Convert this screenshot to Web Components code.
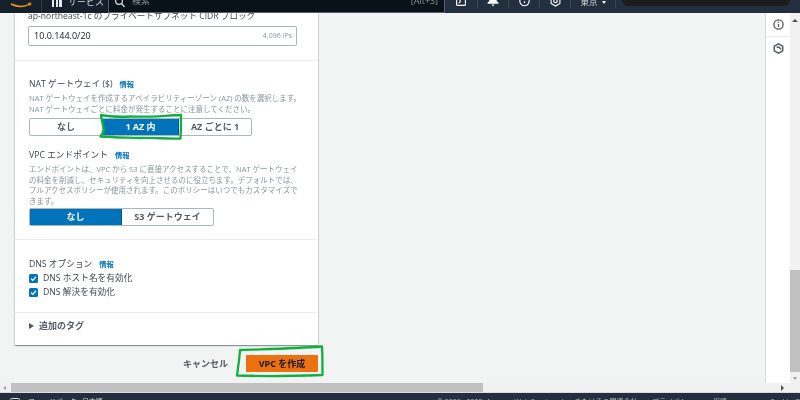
<!DOCTYPE html>
<html lang="ja"><head><meta charset="utf-8">
<style>
html,body{margin:0;height:100%;overflow:hidden}
body{font:9px/12px "Noto Sans CJK JP","Open Sans",sans-serif;color:#16191f;background:#f2f3f3}
</style></head><body>
<aws-shell>
<top-bar slot="top"></top-bar>
<vpc-card slot="card"></vpc-card>
<form-actions slot="actions"></form-actions>
<side-rail slot="rail"></side-rail>
<foot-bar slot="foot"></foot-bar>
</aws-shell>
<script>
const FONT='"Open Sans","Noto Sans CJK JP",sans-serif';
function def(name,html){customElements.define(name,class extends HTMLElement{
  constructor(){super();this.attachShadow({mode:'open'}).innerHTML=html;}
});}
def('aws-shell',`<style>
:host{display:grid;grid-template-rows:13px 370px 10px 7px;height:400px;width:800px;position:relative;overflow:hidden;font-family:${FONT};font-size:9px;filter:blur(.4px)}
.mid{display:grid;grid-template-columns:765px 25px 10px;min-height:0;overflow:hidden}
.content{padding:0 0 0 15px;min-width:0;overflow:hidden}
.vbar{background:#f1f1f1;display:flex;flex-direction:column;align-items:center;position:relative}
.up{width:0;height:0;border:3px solid transparent;border-top:0;border-bottom:3px solid #505050;margin-top:6px}
.thumb{position:absolute;left:0;right:0;top:257px;height:102px;background:#c1c1c1}
.dn{position:absolute;bottom:3px;left:3px;border:2.5px solid transparent;border-bottom:0;border-top:3px solid #a0a0a0}
.h{display:flex;background:#f1f1f1;align-items:center;position:relative;border-bottom:1px solid #dcdcdc}
.hthumb{position:absolute;left:11px;width:472px;top:0;bottom:0;background:#c1c1c1}
.l{margin-left:3px;border:2.5px solid transparent;border-left:0;border-right:3px solid #a0a0a0}
.r{position:absolute;left:781px;border:3px solid transparent;border-right:0;border-left:3px solid #505050}
</style>
<slot name="top"></slot>
<div class="mid"><div class="content"><slot name="card"></slot><slot name="actions"></slot></div><slot name="rail"></slot>
<div class="vbar"><i class="up"></i><i class="thumb"></i><i class="dn"></i></div></div>
<div class="h"><i class="l"></i><i class="hthumb"></i><i class="r"></i></div>
<slot name="foot"></slot>`);
def('top-bar',`<style>
:host{display:flex;height:13px;background:#232f3e;overflow:hidden;color:#d5dbdb;position:relative;z-index:2;font-size:9px}
.dark{width:108px;background:#16202d;flex:none;position:relative}
.aws{position:absolute;left:11px;top:-12px;font:700 13px/14px "Liberation Sans",sans-serif;color:#fff;letter-spacing:.5px}
.logo{position:absolute;left:10px;top:-6px}
.sep{position:absolute;left:41px;top:0;bottom:0;width:1px;background:#2f3a48}
.svc{position:absolute;left:52px;top:-4px;display:flex;align-items:center;gap:6px;white-space:nowrap}
.grid{width:10px;height:10px;background:repeating-linear-gradient(90deg,#e6e9ea 0 2.4px,transparent 2.4px 3.6px)}
.search{flex:none;width:337px;background:#0b1119;border:solid #555f6b;border-width:0 1px 1px;box-sizing:border-box;display:flex;padding:0 6px 0 6px;color:#8d949c;justify-content:space-between;line-height:10px}
.search span{margin-top:-4px;white-space:nowrap;font-size:9px}
.search svg{margin-right:7px;margin-top:-3px;flex:none}
.q{display:flex}
.ic{flex:none;width:31px;display:flex;align-items:flex-start;justify-content:center;border-right:1px solid #3a4654;height:8px;box-sizing:border-box}
.ic svg{margin-top:-5px}
.tok{flex:none;white-space:nowrap;display:flex;gap:4px;align-items:center;width:45px;justify-content:center;margin-top:-4px;height:12px;border-right:1px solid #3a4654;box-sizing:border-box;font-size:8.5px}
.tok i{border:2.5px solid transparent;border-bottom:0;border-top:3px solid #fff}
.black{flex:none;width:168px;height:6px;margin-left:6px;background:#1c1c1c;border-radius:0 0 6px 6px}
</style>
<div class="dark">
<span class="aws">aws</span>
<svg class="logo" width="22" height="16" viewBox="0 0 22 16" fill="none"><path d="M1 10q10 5 19 0" stroke="#f90" stroke-width="1.4"/><path d="M18 9.4l3-.3-1 2.600" stroke="#f90" stroke-width="1"/></svg>
<i class="sep"></i><div class="svc"><i class="grid"></i><span>サービス</span></div></div>
<div class="search"><div class="q"><svg width="10" height="11" viewBox="0 0 10 11" fill="none" stroke="#d5dbdb" stroke-width="1.2"><circle cx="4" cy="4" r="3.4"/><path d="M6.5 6.5l3 3.5"/></svg><span>検索</span></div><span>[Alt+S]</span></div>
<div class="ic" style="width:33px"><svg width="10" height="12" viewBox="0 0 10 12" fill="none" stroke="#fff" stroke-width="1.1"><rect x=".6" y="1" width="8.8" height="9.4" rx="1"/><path d="M2.5 8.5l2-2.2-1-2"/></svg></div>
<div class="ic"><svg width="12" height="12" viewBox="0 0 12 12" fill="#fff"><path d="M6 0c2.5 0 3.4 2 3.4 4.2 0 1.7 1 2.6 2 3.4v1.2H.6V7.6c1-.8 2-1.7 2-3.4C2.600 2 3.500 0 6 0zM4.600 9.500h2.800L6 11.500z"/></svg></div>
<div class="ic"><svg width="11" height="12" viewBox="0 0 11 12" fill="none" stroke="#fff" stroke-width="1.1"><circle cx="5.500" cy="6" r="4.700"/><path d="M5.500 8.200v-2"/></svg></div>
<div class="ic"><svg width="11" height="12" viewBox="0 0 11 12" fill="none" stroke="#fff" stroke-width="1.1"><path d="M5.500 1l4.400 2.500v5L5.500 11 1.100 8.500v-5z"/><circle cx="5.500" cy="6" r="1.700"/></svg></div>
<div class="tok"><span>東京</span><i></i></div>
<div class="black"></div>`);
def('vpc-section',`<style>:host{display:flow-root;padding:var(--pad,0 14px);border-bottom:1px solid #eaeded}</style><slot></slot>`);
def('info-label',`<style>:host{display:flex;gap:7px;align-items:baseline;font-size:8.7px;line-height:12px;color:#414750;white-space:nowrap}
a{color:#0073bb;font-size:7.3px;font-weight:600}</style><slot></slot><a>情報</a>`);
def('seg-group',`<style>:host{display:inline-flex;height:18px;border:1px solid #aab7b8;border-radius:2px;box-sizing:border-box;background:#fff;vertical-align:top}</style><slot></slot>`);
def('seg-btn',`<style>:host{display:flex;align-items:center;justify-content:center;font-size:9px;font-weight:700;color:#545b64;box-sizing:border-box;white-space:nowrap;border-right:1px solid #aab7b8}
:host(:last-child){border-right:0}
:host([on]){background:#0073bb;color:#fff;border-color:#00548c}
</style><slot></slot>`);
def('check-row',`<style>:host{display:flex;align-items:center;gap:5px;height:14px;font-size:8.700px;color:#414750;white-space:nowrap}
i{width:9px;height:9px;background:#0073bb;border-radius:1.500px;display:block}svg{display:block}</style>
<i><svg width="9" height="9" viewBox="0 0 9 9" fill="none" stroke="#fff" stroke-width="1.300"><path d="M2 4.600l1.800 1.800L7 2.700"/></svg></i><slot></slot>`);
def('text-field',`<style>:host{display:flex;justify-content:space-between;align-items:center;width:269px;height:20px;margin-left:-1px;box-sizing:border-box;border:1px solid #aab7b8;border-radius:2px;padding:0 4px 0 5px;background:#fff;font-size:9px;color:#16191f}
span{font-size:7px;color:#8d949c}</style><slot></slot><span>4,096 IPs</span>`);
def('vpc-card',`<style>
:host{display:flow-root;width:303px;height:332px;background:#fff;box-shadow:0 1px 1px rgba(0,28,36,.3),1px 1px 1px rgba(0,28,36,.1),-1px 1px 1px rgba(0,28,36,.1);box-sizing:border-box;position:relative;color:#414750}
.lbl{font-size:8.6px;line-height:12px;color:#414750;margin:-3px 0 0 -1px;white-space:nowrap}
.d{font-size:7.5px;line-height:10.500px;color:#879596;white-space:nowrap;margin-top:3px}
text-field{margin-top:4px}
</style>
<vpc-section style="--pad:0 14px;height:48px;box-sizing:border-box">
<div class="lbl">ap-northeast-1c のプライベートサブネット CIDR ブロック</div>
<text-field>10.0.144.0/20</text-field>
</vpc-section>
<vpc-section style="--pad:17px 14px 0;height:179px;box-sizing:border-box">
<info-label>NAT ゲートウェイ ($)</info-label>
<div class="d">NAT ゲートウェイを作成するアベイラビリティーゾーン (AZ) の数を選択します。<br>NAT ゲートウェイごとに料金が発生することに注意してください。</div>
<seg-group style="margin-top:4px;width:223px">
<seg-btn style="width:73px">なし</seg-btn><seg-btn on style="width:76px">1 AZ 内</seg-btn><seg-btn style="width:72px">AZ ごとに 1</seg-btn></seg-group>
<info-label style="margin-top:13px">VPC エンドポイント</info-label>
<div class="d">エンドポイントは、VPC から S3 に直接アクセスすることで、NAT ゲートウェイ<br>の料金を削減し、セキュリティを向上させるのに役立ちます。デフォルトでは、<br>フルアクセスポリシーが使用されます。このポリシーはいつでもカスタマイズで<br>きます。</div>
<seg-group style="margin-top:2px;width:185px"><seg-btn on style="width:92px">なし</seg-btn><seg-btn style="width:91px">S3 ゲートウェイ</seg-btn></seg-group>
</vpc-section>
<vpc-section style="--pad:18px 14px 0;height:73px;box-sizing:border-box">
<info-label>DNS オプション</info-label>
<check-row style="margin-top:1px">DNS ホスト名を有効化</check-row>
<check-row>DNS 解決を有効化</check-row>
</vpc-section>
<vpc-section style="--pad:7px 14px 0;border:0">
<tag-toggle>追加のタグ</tag-toggle>
</vpc-section>`);
def('tag-toggle',`<style>:host{display:flex;align-items:center;gap:5px;font-size:9px;font-weight:600;color:#545b64}
i{border:3px solid transparent;border-right:0;border-left:5px solid #545b64}</style><i></i><slot></slot>`);
def('form-actions',`<style>
:host{display:flex;justify-content:flex-end;align-items:center;width:303px;height:17px;margin-top:10px;gap:18px;position:relative}
span{font-size:9px;font-weight:600;color:#545b64}
b{width:72px;height:17px;background:#ec7211;color:#16191f;font-size:9px;font-weight:700;display:flex;align-items:center;justify-content:center;border-radius:1px}
</style><span>キャンセル</span><b>VPC を作成</b>`);
def('side-rail',`<style>
:host{display:flex;flex-direction:column;align-items:center;background:#fff;border-left:1px solid #d5dbdb;box-sizing:border-box;position:relative}
.a{height:23px;width:100%;display:flex;justify-content:center;align-items:center;border-bottom:1px solid #eaeded}
.b{height:23px;display:flex;align-items:center}
</style>
<div class="a"><svg width="11" height="11" viewBox="0 0 11 11" fill="none" stroke="#545b64" stroke-width="1.300"><circle cx="5.500" cy="5.500" r="4.600"/><path d="M5.500 5v3M5.500 2.600v1.200"/></svg></div>
<div class="b"><svg width="11" height="11" viewBox="0 0 11 11" fill="none" stroke="#545b64" stroke-width="1.500"><path d="M5.500 .8l4.200 2.300v4.800l-4.200 2.300-4.200-2.300V3.100z"/><path d="M3.600 4.200h2.400l2 2"/></svg></div>`);
def('foot-bar',`<style>
:host{display:block;background:#232f3e;color:#d5dbdb;font-size:7px;line-height:10px;overflow:hidden;position:relative;box-sizing:border-box;white-space:nowrap;padding-top:4px}
.row{display:flex}
.l{display:flex;gap:5px;margin-left:10px;flex:none;width:427px}
svg{flex:none;margin:1px 3px 0 0}
.r{display:flex;color:#aab7b8}
.r span:nth-child(1){width:215px}.r span:nth-child(2){width:61px}.r span:nth-child(3){width:57px}
</style>
<div class="row"><div class="l"><svg width="10" height="10" viewBox="0 0 10 10" fill="none" stroke="#d5dbdb"><rect x=".5" y=".5" width="9" height="7" rx="1"/></svg><span>フィードバック</span><span>日本語</span></div>
<div class="r"><span>© 2008 - 2022, Amazon Web Services, Inc. またはその関連会社。</span><span>プライバシー</span><span>用語</span><span>Cookie の設定</span></div></div>`);
def('ink-mark',`<style>:host{position:absolute;left:0;top:0;width:800px;height:400px;pointer-events:none}svg{display:block}</style>
<svg width="800" height="400" viewBox="0 0 800 400" fill="none" stroke="#10b040" stroke-width="2.300" stroke-linejoin="round" stroke-linecap="round">
<path d="M101 115c10 2 20 2 30 1.500 18 1 34-1 50-1.500 0 8 0 16-.5 23.500-12 .5-28-1-40-.5-14-.5-28-.5-40-1.500 3-4 4-6 3-9-1-4-2-8-2.500-12.500z"/>
<path d="M240 350c28-1 56-1.500 82-3.500.5 9 .5 19 .5 28.500-28 1-58 1.500-85.500.5 1-8 2.500-17 3-25.500z"/></svg>`);
document.querySelector('aws-shell').shadowRoot.appendChild(document.createElement('ink-mark'));
</script></body></html>
